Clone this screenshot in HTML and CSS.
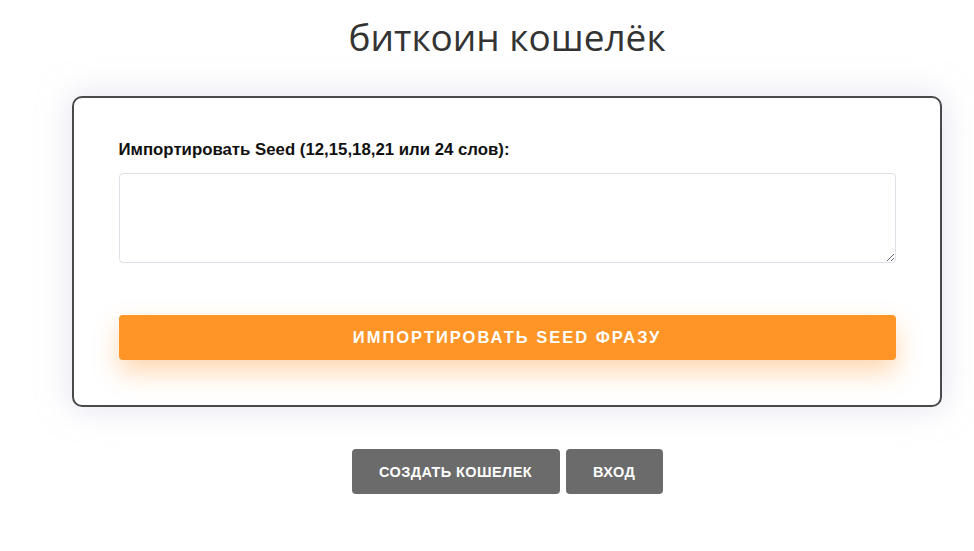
FILE: index.html
```html
<!DOCTYPE html>
<html lang="ru">
<head>
<meta charset="utf-8">
<title>биткоин кошелёк</title>
<link rel="stylesheet" href="styles.css">
</head>
<body>
<div class="page">
  <h1 class="title">биткоин кошелёк</h1>
  <div class="card">
    <label class="label" for="seed">Импортировать Seed (12,15,18,21 или 24 слов):</label>
    <textarea id="seed" class="seed"></textarea>
    <button class="import-btn">ИМПОРТИРОВАТЬ SEED ФРАЗУ</button>
  </div>
  <div class="actions">
    <button class="gray-btn create">СОЗДАТЬ КОШЕЛЕК</button>
    <button class="gray-btn login">ВХОД</button>
  </div>
</div>
</body>
</html>
```
FILE: styles.css
```css
html, body {
  margin: 0;
  padding: 0;
  background: #ffffff;
}
.page {
  width: 870px;
  margin-left: 72px;
  display: flex;
  flex-direction: column;
  align-items: stretch;
}
.title {
  margin: 12px 0 0;
  height: 84px;
  font-family: "Open Sans", sans-serif;
  font-weight: 400;
  font-size: 37px;
  line-height: 50px;
  color: #333333;
  text-align: center;
}
.card {
  box-sizing: border-box;
  height: 311px;
  border: 2px solid #4a4a4a;
  border-radius: 10px;
  background: #ffffff;
  box-shadow: 0 0 32px rgba(200, 200, 225, 0.55);
  padding: 42px 44.5px 0 44.5px;
  display: flex;
  flex-direction: column;
}
.label {
  font-family: "Liberation Sans", Arial, sans-serif;
  font-weight: 700;
  font-size: 16.8px;
  line-height: 20px;
  color: #111111;
  margin-bottom: 13px;
}
.seed {
  box-sizing: border-box;
  height: 90px;
  width: 100%;
  border: 1.5px solid #e0e0e8;
  border-radius: 4px;
  resize: vertical;
  margin: 0;
  font-family: "Liberation Sans", Arial, sans-serif;
}
.import-btn {
  margin-top: 52px;
  height: 45px;
  border: none;
  border-radius: 4px;
  background: #ff9526;
  color: #ffffff;
  font-family: "Liberation Sans", Arial, sans-serif;
  font-weight: 700;
  font-size: 16.5px;
  letter-spacing: 2px;
  box-shadow: 0 12px 26px rgba(255, 140, 30, 0.35);
}
.actions {
  margin-top: 42px;
  display: flex;
  justify-content: center;
  gap: 6px;
}
.gray-btn {
  height: 45px;
  border: none;
  border-radius: 4px;
  background: #6b6b6b;
  color: #ffffff;
  font-family: "Liberation Sans", Arial, sans-serif;
  font-weight: 700;
  font-size: 14.5px;
  letter-spacing: 0.4px;
}
.create {
  width: 208px;
}
.login {
  width: 97px;
}
```
